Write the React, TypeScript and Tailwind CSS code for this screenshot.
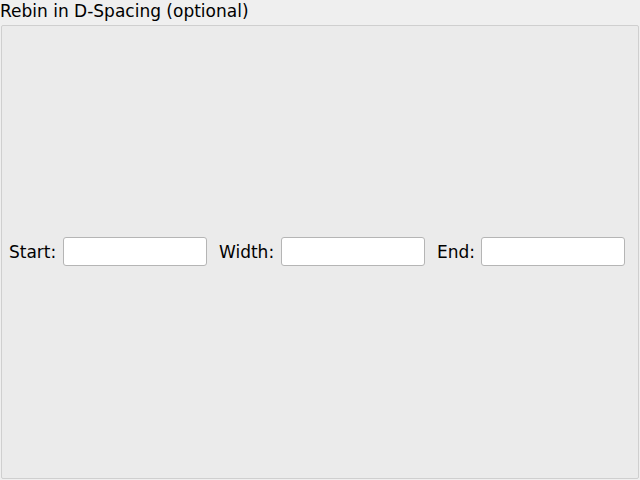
import React from "react";

export default function App() {
  return (
    <div className="w-[640px] h-[480px] bg-[#efefef] flex flex-col font-['DejaVu_Sans',sans-serif] text-[17px] text-black">
      <div className="h-[25px] leading-[22px] pl-0">Rebin in D-Spacing (optional)</div>
      <div className="flex-1 mx-[1px] mb-[1px] border border-[#cfcfcf] rounded-[2px] bg-[#ebebeb] flex items-center pl-[7px] pb-[2px]">
        <Field label="Start:" labelWidth="w-[54px]" />
        <Field label="Width:" labelWidth="w-[62px]" className="ml-[12px]" />
        <Field label="End:" labelWidth="w-[44px]" className="ml-[12px]" />
      </div>
    </div>
  );
}

function Field({ label, labelWidth, className = "" }: { label: string; labelWidth: string; className?: string }) {
  return (
    <div className={`flex items-center ${className}`}>
      <span className={`${labelWidth} pt-[4px]`}>{label}</span>
      <input className="w-[144px] h-[29px] bg-white border border-[#b5b5b5] rounded-[3px] outline-none" />
    </div>
  );
}
